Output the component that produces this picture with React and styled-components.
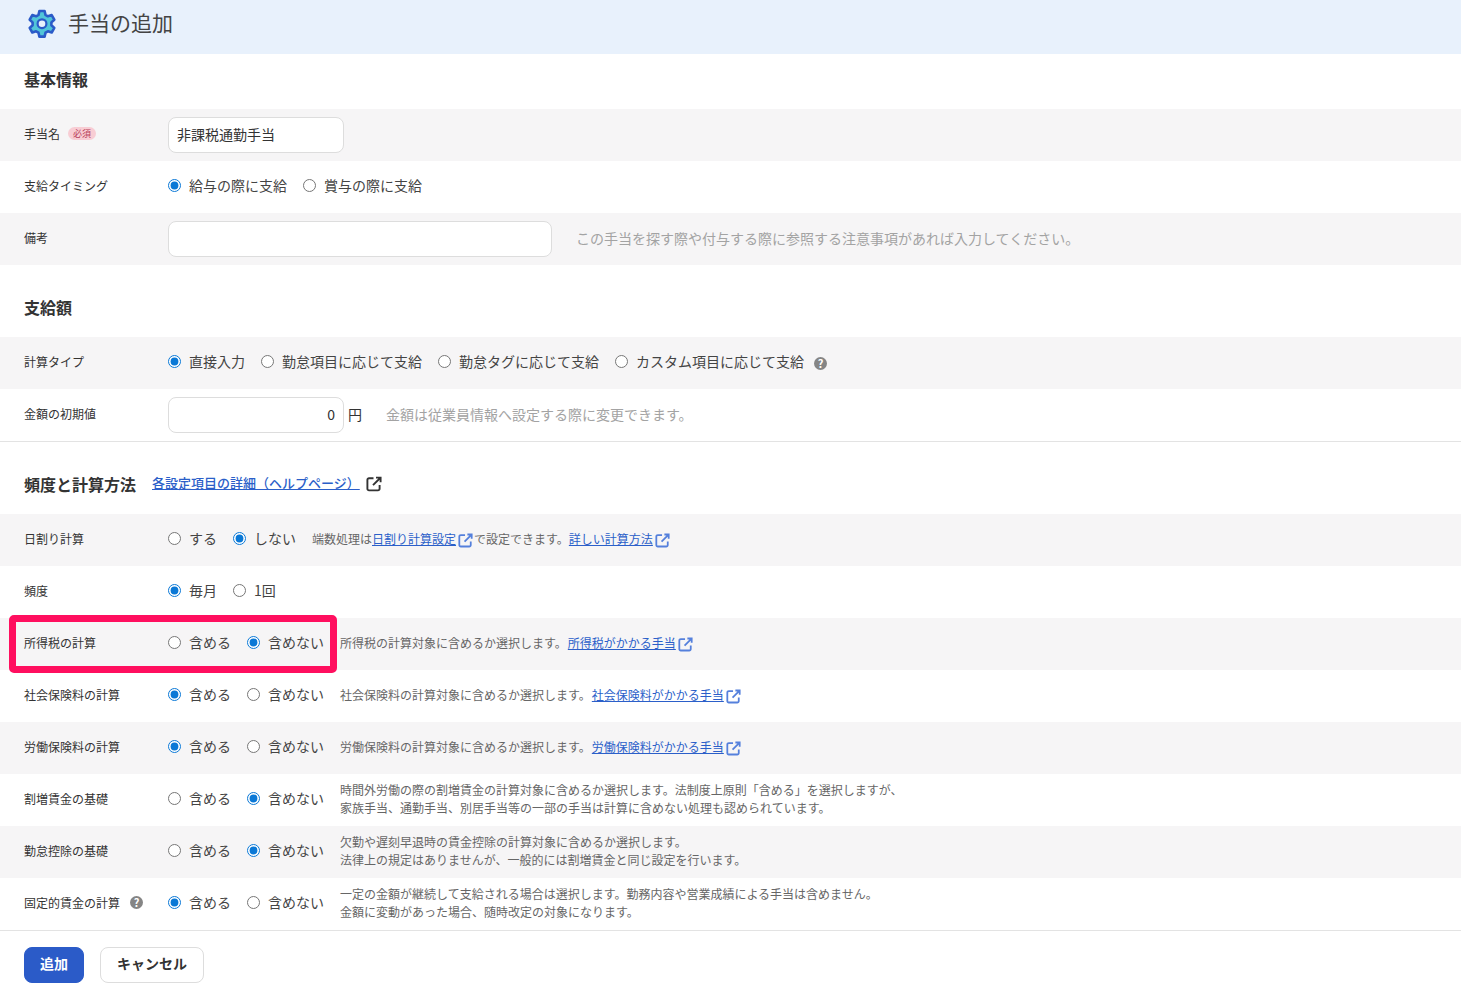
import React from "react";
import styled, { createGlobalStyle } from "styled-components";

const GlobalStyle = createGlobalStyle`
  html, body {
    margin: 0;
    padding: 0;
    background: #fff;
  }
  body {
    font-family: "Noto Sans CJK JP", "Noto Sans", sans-serif;
    color: #333;
  }
`;

const Page = styled.div`
  width: 100%;
`;

const Header = styled.header`
  display: flex;
  align-items: center;
  gap: 11px;
  height: 54px;
  padding: 0 0 6px 26px;
  box-sizing: border-box;
  background: #e8f1fc;
`;

const Title = styled.h1`
  margin: 0 0 5px -1px;
  font-size: 21px;
  font-weight: 400;
  line-height: 28px;
  color: #444;
`;

const SectionTitle = styled.div`
  display: flex;
  align-items: flex-end;
  gap: 16px;
  height: ${(p) => p.$height}px;
  padding: 0 24px 19px;
  box-sizing: border-box;
`;

const SectionName = styled.h2`
  margin: 0;
  font-size: 16px;
  font-weight: 700;
  line-height: 22px;
  color: #333;
`;

const HelpLink = styled.a`
  display: flex;
  align-items: center;
  gap: 6px;
  font-size: 13px;
  font-weight: 500;
  line-height: 20px;
  color: #2b5fc9;
  span {
    padding-bottom: 2px;
    text-decoration: underline;
  }
  svg {
    color: #333;
  }
`;

const RowGroup = styled.div`
  border-bottom: ${(p) => (p.$ruled ? "1px solid #e3e3e3" : "none")};
  & > div:nth-child(odd) {
    background: #f6f5f6;
  }
`;

const Row = styled.div`
  position: relative;
  display: flex;
  align-items: center;
  height: 52px;
  padding-left: 24px;
`;

const Label = styled.div`
  display: flex;
  align-items: center;
  flex: 0 0 144px;
  padding-bottom: 3px;
  font-size: 12px;
  color: #333;
`;

const Badge = styled.span`
  margin-left: 8px;
  width: 28px;
  height: 13px;
  border-radius: 7px;
  background: #f8cdd4;
  color: #b8405a;
  font-size: 9px;
  line-height: 13px;
  text-align: center;
`;

const QuestionMark = styled.span`
  display: inline-block;
  width: 13px;
  height: 13px;
  margin-left: ${(p) => p.$gap}px;
  border-radius: 50%;
  background: #858585;
  color: #fff;
  font-size: 11px;
  font-weight: 700;
  line-height: 13px;
  text-align: center;
`;

const TextField = styled.input`
  width: ${(p) => p.$width}px;
  height: 36px;
  padding: 0 8px 3px;
  box-sizing: border-box;
  border: 1px solid #ddd;
  border-radius: 8px;
  background: #fff;
  font-family: inherit;
  font-size: 14px;
  color: #333;
  text-align: ${(p) => (p.$right ? "right" : "left")};
  outline: none;
`;

const Unit = styled.span`
  margin-left: 4px;
  padding-bottom: 2px;
  font-size: 14px;
`;

const FaintNote = styled.span`
  margin-left: ${(p) => p.$gap}px;
  padding-bottom: 2px;
  font-size: 14px;
  color: #a3a3a3;
`;

const RadioOption = styled.label`
  display: flex;
  align-items: center;
  gap: 8px;
  margin-right: 16px;
  padding-bottom: 4px;
  font-size: 14px;
  line-height: 20px;
  color: #444;
  input {
    width: 13px;
    height: 13px;
    margin: 1px 0 0;
    accent-color: #0a78d6;
  }
`;

const Hint = styled.div`
  padding-bottom: 2px;
  font-size: 12px;
  line-height: 18px;
  color: #666;
  a {
    margin-left: ${(p) => (p.$tight ? 0 : 1)}px;
    color: #2b5fc9;
    text-decoration: underline;
  }
  svg {
    margin: 0 1px 0 2px;
    vertical-align: -4px;
    color: #5580dc;
  }
`;

const Highlight = styled.div`
  position: absolute;
  top: -3px;
  left: 9px;
  width: 328px;
  height: 58px;
  box-sizing: border-box;
  border: 7px solid #ff0f5f;
  border-radius: 5px;
  pointer-events: none;
`;

const Footer = styled.div`
  display: flex;
  gap: 16px;
  padding: 16px 24px 22px;
`;

const Button = styled.button`
  height: 36px;
  width: ${(p) => p.$width}px;
  border: 1px solid ${(p) => (p.$primary ? "#2b5bc8" : "#ddd")};
  border-radius: 8px;
  background: ${(p) => (p.$primary ? "#2b5bc8" : "#fff")};
  color: ${(p) => (p.$primary ? "#fff" : "#333")};
  font-family: inherit;
  font-size: 14px;
  font-weight: 700;
  padding: 0 0 4px;
`;

const GearIcon = () => (
  <svg width="32" height="32" viewBox="0 0 32 32" aria-hidden="true">
    <path
      d="M13.4 3h5.2l.9 3.9 2.4 1.4 3.8-1.2 2.6 4.6-2.9 2.7v2.8l2.9 2.7-2.6 4.6-3.8-1.2-2.4 1.4-.9 3.9h-5.2l-.9-3.9-2.4-1.4-3.8 1.2-2.6-4.6 2.9-2.7v-2.8l-2.9-2.7 2.6-4.6 3.8 1.2 2.4-1.4z"
      fill="#52c5d8"
      stroke="#2b5bc8"
      strokeWidth="2.6"
      strokeLinejoin="round"
    />
    <circle cx="16" cy="15.7" r="4.4" fill="#e8f1fc" stroke="#2b5bc8" strokeWidth="2.2" />
  </svg>
);

const ExternalIcon = ({ size = 15 }) => (
  <svg width={size} height={size} viewBox="0 0 16 16" fill="none" stroke="currentColor" strokeWidth="1.9" aria-hidden="true">
    <path d="M7.5 2.2H3A1.6 1.6 0 0 0 1.4 3.8v9A1.6 1.6 0 0 0 3 14.4h9a1.6 1.6 0 0 0 1.6-1.6V9" />
    <path d="M10 1.6h4.6v4.6M14.2 2 7 9.2" />
  </svg>
);

const Radios = ({ name, options, checked }) =>
  options.map((text, i) => (
    <RadioOption key={text}>
      <input type="radio" name={name} defaultChecked={i === checked} />
      {text}
    </RadioOption>
  ));

const include = ["含める", "含めない"];

const taxRows = [
  {
    label: "所得税の計算",
    checked: 1,
    marked: true,
    hint: (
      <>
        所得税の計算対象に含めるか選択します。<a>所得税がかかる手当</a>
        <ExternalIcon />
      </>
    ),
  },
  {
    label: "社会保険料の計算",
    checked: 0,
    hint: (
      <>
        社会保険料の計算対象に含めるか選択します。<a>社会保険料がかかる手当</a>
        <ExternalIcon />
      </>
    ),
  },
  {
    label: "労働保険料の計算",
    checked: 0,
    hint: (
      <>
        労働保険料の計算対象に含めるか選択します。<a>労働保険料がかかる手当</a>
        <ExternalIcon />
      </>
    ),
  },
  {
    label: "割増賃金の基礎",
    checked: 1,
    hint: (
      <>
        時間外労働の際の割増賃金の計算対象に含めるか選択します。法制度上原則「含める」を選択しますが、
        <br />
        家族手当、通勤手当、別居手当等の一部の手当は計算に含めない処理も認められています。
      </>
    ),
  },
  {
    label: "勤怠控除の基礎",
    checked: 1,
    hint: (
      <>
        欠勤や遅刻早退時の賃金控除の計算対象に含めるか選択します。
        <br />
        法律上の規定はありませんが、一般的には割増賃金と同じ設定を行います。
      </>
    ),
  },
  {
    label: "固定的賃金の計算",
    checked: 0,
    help: true,
    hint: (
      <>
        一定の金額が継続して支給される場合は選択します。勤務内容や営業成績による手当は含めません。
        <br />
        金額に変動があった場合、随時改定の対象になります。
      </>
    ),
  },
];

export default function App() {
  return (
    <Page>
      <GlobalStyle />
      <Header>
        <GearIcon />
        <Title>手当の追加</Title>
      </Header>

      <SectionTitle $height={55}>
        <SectionName>基本情報</SectionName>
      </SectionTitle>
      <RowGroup>
        <Row>
          <Label>
            手当名<Badge>必須</Badge>
          </Label>
          <TextField $width={176} defaultValue="非課税通勤手当" />
        </Row>
        <Row>
          <Label>支給タイミング</Label>
          <Radios name="timing" options={["給与の際に支給", "賞与の際に支給"]} checked={0} />
        </Row>
        <Row>
          <Label>備考</Label>
          <TextField $width={384} />
          <FaintNote $gap={24}>この手当を探す際や付与する際に参照する注意事項があれば入力してください。</FaintNote>
        </Row>
      </RowGroup>

      <SectionTitle $height={72}>
        <SectionName>支給額</SectionName>
      </SectionTitle>
      <RowGroup $ruled>
        <Row>
          <Label>計算タイプ</Label>
          <Radios
            name="calc"
            options={["直接入力", "勤怠項目に応じて支給", "勤怠タグに応じて支給", "カスタム項目に応じて支給"]}
            checked={0}
          />
          <QuestionMark $gap={-6}>?</QuestionMark>
        </Row>
        <Row>
          <Label>金額の初期値</Label>
          <TextField $width={176} $right defaultValue="0" />
          <Unit>円</Unit>
          <FaintNote $gap={24}>金額は従業員情報へ設定する際に変更できます。</FaintNote>
        </Row>
      </RowGroup>

      <SectionTitle $height={72}>
        <SectionName>頻度と計算方法</SectionName>
        <HelpLink>
          <span>各設定項目の詳細（ヘルプページ）</span>
          <ExternalIcon size={16} />
        </HelpLink>
      </SectionTitle>
      <RowGroup $ruled>
        <Row>
          <Label>日割り計算</Label>
          <Radios name="daily" options={["する", "しない"]} checked={1} />
          <Hint $tight>
            端数処理は<a>日割り計算設定</a>
            <ExternalIcon />
            で設定できます。<a>詳しい計算方法</a>
            <ExternalIcon />
          </Hint>
        </Row>
        <Row>
          <Label>頻度</Label>
          <Radios name="freq" options={["毎月", "1回"]} checked={0} />
        </Row>
        {taxRows.map((row) => (
          <Row key={row.label}>
            <Label>
              {row.label}
              {row.help && <QuestionMark $gap={10}>?</QuestionMark>}
            </Label>
            <Radios name={row.label} options={include} checked={row.checked} />
            <Hint>{row.hint}</Hint>
            {row.marked && <Highlight />}
          </Row>
        ))}
      </RowGroup>

      <Footer>
        <Button $primary $width={60}>追加</Button>
        <Button $width={104}>キャンセル</Button>
      </Footer>
    </Page>
  );
}
